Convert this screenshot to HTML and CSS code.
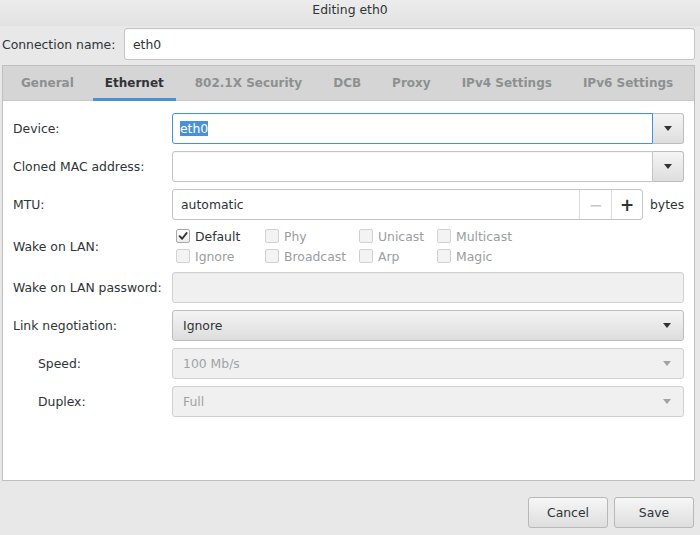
FILE: index.html
```html
<!DOCTYPE html>
<html>
<head>
<meta charset="utf-8">
<link rel="stylesheet" href="styles.css">
</head>
<body>
<div class="window">
  <div class="titlebar">Editing eth0</div>
  <div class="conn-row">
    <span class="conn-label">Connection name:</span>
    <div class="entry conn-entry">eth0</div>
  </div>
  <div class="notebook">
    <div class="tabs">
      <span class="tab">General</span>
      <span class="tab active">Ethernet</span>
      <span class="tab">802.1X Security</span>
      <span class="tab">DCB</span>
      <span class="tab">Proxy</span>
      <span class="tab">IPv4 Settings</span>
      <span class="tab">IPv6 Settings</span>
    </div>
    <div class="page">
      <div class="form">
        <div class="label">Device:</div>
        <div class="combo-entry">
          <div class="entry focused"><span class="sel">eth0</span></div>
          <div class="drop-btn"><span class="arrow"></span></div>
        </div>

        <div class="label">Cloned MAC address:</div>
        <div class="combo-entry">
          <div class="entry"></div>
          <div class="drop-btn"><span class="arrow"></span></div>
        </div>

        <div class="label">MTU:</div>
        <div class="mtu">
          <div class="spin">
            <div class="spin-text">automatic</div>
            <div class="spin-btn minus">&minus;</div>
            <div class="spin-btn plus">+</div>
          </div>
          <span class="unit">bytes</span>
        </div>

        <div class="label wol-label">Wake on LAN:</div>
        <div class="checks">
          <label class="check"><span class="box checked"><svg viewBox="0 0 14 14" width="14" height="14"><path d="M3 7.2 L6 10.2 L11.2 3.6" fill="none" stroke="#2e3436" stroke-width="2.2" stroke-linecap="round" stroke-linejoin="round"/></svg></span><span class="ctext on">Default</span></label>
          <label class="check"><span class="box"></span><span class="ctext">Phy</span></label>
          <label class="check"><span class="box"></span><span class="ctext">Unicast</span></label>
          <label class="check"><span class="box"></span><span class="ctext">Multicast</span></label>
          <label class="check"><span class="box"></span><span class="ctext">Ignore</span></label>
          <label class="check"><span class="box"></span><span class="ctext">Broadcast</span></label>
          <label class="check"><span class="box"></span><span class="ctext">Arp</span></label>
          <label class="check"><span class="box"></span><span class="ctext">Magic</span></label>
        </div>

        <div class="label">Wake on LAN password:</div>
        <div class="entry disabled"></div>

        <div class="label">Link negotiation:</div>
        <div class="combo"><span>Ignore</span><span class="arrow"></span></div>

        <div class="label indent">Speed:</div>
        <div class="combo disabled"><span>100 Mb/s</span><span class="arrow"></span></div>

        <div class="label indent">Duplex:</div>
        <div class="combo disabled"><span>Full</span><span class="arrow"></span></div>
      </div>
    </div>
  </div>
  <div class="actions">
    <div class="button">Cancel</div>
    <div class="button">Save</div>
  </div>
</div>
</body>
</html>
```

FILE: styles.css
```css
html, body {
  margin: 0;
  padding: 0;
}
body {
  width: 700px;
  height: 535px;
  overflow: hidden;
  background: #e8e8e8;
  font-family: "DejaVu Sans", "Liberation Sans", sans-serif;
  font-size: 12.4px;
  color: #2e3436;
  white-space: nowrap;
}
.window {
  display: flex;
  flex-direction: column;
  height: 535px;
}
.titlebar {
  height: 26px;
  line-height: 19px;
  text-align: center;
  background: linear-gradient(#ececec, #e2e2e2);
  color: #2e3436;
  flex: none;
}
.conn-row {
  display: flex;
  align-items: center;
  padding: 2px 5px 0 2px;
  gap: 12px;
  height: 32px;
}
.conn-label {
  width: 110px;
  flex: none;
}
.entry {
  box-sizing: border-box;
  height: 32px;
  background: #ffffff;
  border: 1px solid #c4c4c4;
  border-radius: 3px;
  padding: 0 8px;
  display: flex;
  align-items: center;
  box-shadow: inset 0 1px 0 rgba(0,0,0,0.03);
}
.conn-entry {
  flex: 1;
  height: 32px;
}
.notebook {
  margin: 5px 5px 0 2px;
  border: 1px solid #bfbfbf;
  background: #ffffff;
  display: flex;
  flex-direction: column;
}
.tabs {
  height: 35px;
  background: #d5d5d5;
  border-bottom: 1px solid #c8c8c8;
  display: flex;
  align-items: center;
  padding-left: 2.5px;
  box-sizing: border-box;
}
.tab {
  font-weight: bold;
  font-size: 12px;
  color: #8d9091;
  padding: 0 12px;
  margin: 0 3.5px;
  height: 35px;
  line-height: 34px;
  box-sizing: border-box;
}
.tab.active {
  color: #2e3436;
  box-shadow: inset 0 -3px 0 #4a90d9;
}
.page {
  height: 379px;
  box-sizing: border-box;
  padding: 12px 11px 0 10px;
}
.form {
  display: grid;
  grid-template-columns: 159px 1fr;
  row-gap: 7px;
  align-items: center;
}
.label {
  color: #2e3436;
}
.indent {
  padding-left: 25px;
}
.combo-entry {
  display: flex;
  height: 31px;
}
.combo-entry .entry {
  flex: 1;
  height: 31px;
  border-radius: 3px 0 0 3px;
}
.entry.focused {
  border-color: #4a90d9;
}
.sel {
  background: #4a90d9;
  color: #ffffff;
  margin-left: -1px;
}
.drop-btn {
  width: 31px;
  box-sizing: border-box;
  height: 31px;
  border: 1px solid #bdbdbd;
  border-left: none;
  border-radius: 0 3px 3px 0;
  background: linear-gradient(#f4f4f4, #dedede);
  display: flex;
  align-items: center;
  justify-content: center;
}
.arrow {
  width: 0;
  height: 0;
  border-left: 4.5px solid transparent;
  border-right: 4.5px solid transparent;
  border-top: 5px solid #2e3436;
}
.mtu {
  display: flex;
  align-items: center;
  height: 31px;
  gap: 7px;
}
.spin {
  display: flex;
  height: 31px;
  box-sizing: border-box;
  border: 1px solid #c4c4c4;
  border-radius: 3px;
  background: #ffffff;
  width: 471px;
}
.spin-text {
  flex: 1;
  display: flex;
  align-items: center;
  padding-left: 8px;
}
.spin-btn {
  width: 31px;
  border-left: 1px solid #dcdcdc;
  display: flex;
  align-items: center;
  justify-content: center;
  font-size: 17px;
}
.spin-btn.minus {
  color: #c8c8c8;
}
.spin-btn.plus {
  color: #2e3436;
  font-weight: bold;
  width: 30px;
}
.unit {
  color: #2e3436;
}
.wol-label {
  align-self: center;
}
.checks {
  display: grid;
  grid-template-columns: 89px 94px 78px auto;
  grid-template-rows: 20px 20px;
  padding: 0 0 0 4px;
  height: 38px;
  align-content: center;
}
.check {
  display: flex;
  align-items: center;
  gap: 5px;
}
.box {
  box-sizing: border-box;
  width: 14px;
  height: 14px;
  border: 1px solid #d2d2d2;
  border-radius: 2px;
  background: #f3f3f3;
  display: flex;
  align-items: center;
  justify-content: center;
}
.box.checked {
  border-color: #a8a8a8;
  background: linear-gradient(#ffffff, #ececec);
}
.box svg {
  display: block;
}
.ctext {
  color: #9a9d9e;
}
.ctext.on {
  color: #2e3436;
}
.entry.disabled {
  height: 31px;
  background: #f0f0f0;
  border-color: #d0d0d0;
}
.combo {
  box-sizing: border-box;
  height: 31px;
  border: 1px solid #bdbdbd;
  border-radius: 3px;
  background: linear-gradient(#f4f4f4, #dddddd);
  display: flex;
  align-items: center;
  justify-content: space-between;
  padding: 0 12px 0 10px;
}
.combo.disabled {
  background: #f0f0f0;
  border-color: #d0d0d0;
  color: #a0a3a4;
}
.combo.disabled .arrow {
  border-top-color: #a0a3a4;
}
.actions {
  display: flex;
  justify-content: flex-end;
  gap: 6px;
  padding: 16px 6px 0 0;
}
.button {
  box-sizing: border-box;
  width: 80px;
  height: 31px;
  border: 1px solid #b8b8b8;
  border-radius: 3px;
  background: linear-gradient(#f6f6f6, #dedede);
  display: flex;
  align-items: center;
  justify-content: center;
  color: #2e3436;
}
```
